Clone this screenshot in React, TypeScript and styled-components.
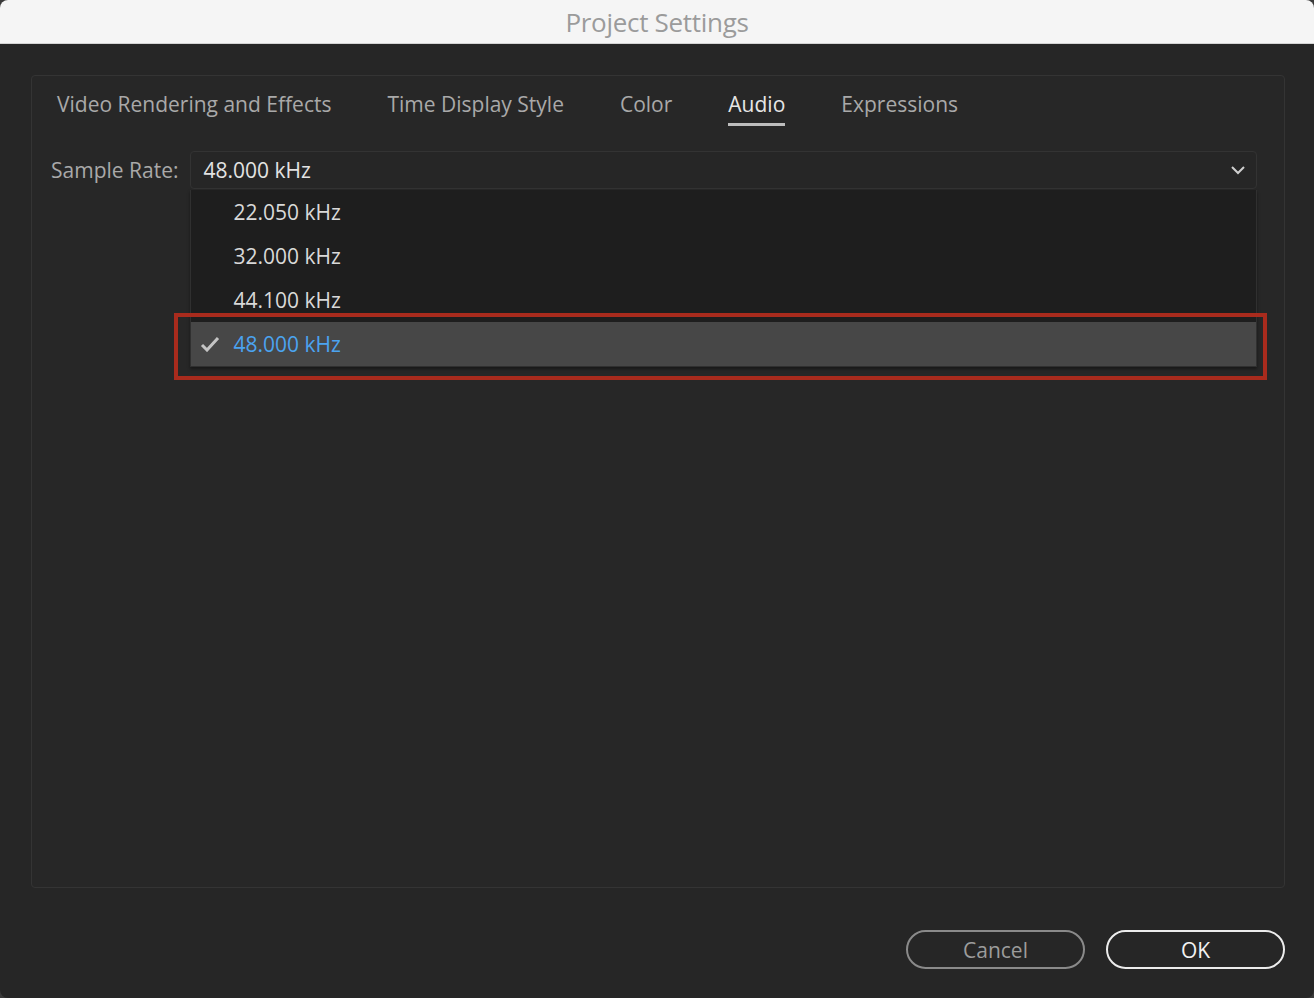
import React from 'react';
import styled, { createGlobalStyle } from 'styled-components';

const GlobalStyle = createGlobalStyle`
  html, body {
    margin: 0;
    padding: 0;
    background: #3a3a3a;
  }
  body {
    font-family: 'Open Sans', 'Noto Sans', sans-serif;
  }
`;

const Window = styled.div`
  width: 1314px;
  height: 998px;
  display: flex;
  flex-direction: column;
  background: #262626;
  border-radius: 8px;
  overflow: hidden;
`;

const TitleBar = styled.div`
  height: 43px;
  flex: none;
  display: flex;
  align-items: center;
  justify-content: center;
  background: #f5f5f5;
  border-bottom: 1px solid #d4d4d4;
  color: #9b9b9b;
  font-size: 26px;
  letter-spacing: -0.3px;
`;

const Body = styled.div`
  flex: 1;
  display: flex;
  flex-direction: column;
  padding: 31px 29px 29px 31px;
`;

const Panel = styled.div`
  height: 813px;
  flex: none;
  box-sizing: border-box;
  border: 1px solid #343434;
  border-radius: 4px;
  background: #272727;
  display: flex;
  flex-direction: column;
`;

const Tabs = styled.div`
  display: flex;
  gap: 56px;
  padding: 13px 0 0 25px;
  height: 75px;
  box-sizing: border-box;
`;

const Tab = styled.div<{ $active?: boolean }>`
  font-size: 21px;
  line-height: 30px;
  color: ${(p) => (p.$active ? '#e6e6e6' : '#a9a9a9')};
  border-bottom: 3px solid ${(p) => (p.$active ? '#bdbdbd' : 'transparent')};
  height: 34px;
`;

const FieldRow = styled.div`
  display: flex;
  align-items: center;
  padding: 0 27px 0 19px;
  gap: 12px;
`;

const Label = styled.div`
  font-size: 21px;
  color: #a9a9a9;
`;

const SelectWrap = styled.div`
  position: relative;
  flex: 1;
`;

const SelectBox = styled.div`
  height: 38px;
  box-sizing: border-box;
  border: 1px solid #333333;
  border-radius: 4px;
  background: #262626;
  display: flex;
  align-items: center;
  justify-content: space-between;
  padding: 0 10px 0 12px;
  font-size: 21px;
  color: #e3e3e3;
`;

const Menu = styled.div`
  position: absolute;
  top: 39px;
  left: 0;
  right: 0;
  background: #1e1e1e;
  border: 1px solid #303030;
  border-top: none;
  box-shadow: 0 2px 3px rgba(0, 0, 0, 0.4);
`;

const Item = styled.div<{ $selected?: boolean }>`
  height: 44px;
  display: flex;
  align-items: center;
  padding-left: 42px;
  position: relative;
  font-size: 21px;
  color: ${(p) => (p.$selected ? '#4ba3f0' : '#d9d9d9')};
  background: ${(p) => (p.$selected ? '#474747' : 'transparent')};
`;

const Check = styled.svg`
  position: absolute;
  left: 9px;
  top: 14px;
`;

const Highlight = styled.div`
  position: absolute;
  left: -16px;
  right: -10px;
  top: 162px;
  height: 67px;
  box-sizing: border-box;
  border: 4px solid #a92b1d;
  pointer-events: none;
`;

const Footer = styled.div`
  flex: 1;
  display: flex;
  justify-content: flex-end;
  align-items: flex-end;
  gap: 21px;
`;

const Button = styled.div<{ $primary?: boolean }>`
  width: 179px;
  height: 39px;
  box-sizing: border-box;
  border-radius: 20px;
  border: 2px solid ${(p) => (p.$primary ? '#ececec' : '#8a8a8a')};
  color: ${(p) => (p.$primary ? '#f2f2f2' : '#9c9c9c')};
  display: flex;
  align-items: center;
  justify-content: center;
  font-size: 21px;
`;

const rates = ['22.050 kHz', '32.000 kHz', '44.100 kHz', '48.000 kHz'];

export default function App() {
  return (
    <>
      <GlobalStyle />
      <Window>
        <TitleBar>Project Settings</TitleBar>
        <Body>
          <Panel>
            <Tabs>
              <Tab>Video Rendering and Effects</Tab>
              <Tab>Time Display Style</Tab>
              <Tab>Color</Tab>
              <Tab $active>Audio</Tab>
              <Tab>Expressions</Tab>
            </Tabs>
            <FieldRow>
              <Label>Sample Rate:</Label>
              <SelectWrap>
                <SelectBox>
                  <span>48.000 kHz</span>
                  <svg width="16" height="10" viewBox="0 0 16 10">
                    <path d="M2 2 L8 8 L14 2" stroke="#cfcfcf" strokeWidth="2" fill="none" />
                  </svg>
                </SelectBox>
                <Menu>
                  {rates.map((r) => (
                    <Item key={r} $selected={r === '48.000 kHz'}>
                      {r === '48.000 kHz' && (
                        <Check width="20" height="16" viewBox="0 0 20 16">
                          <path d="M2 9 L7 14 L18 2" stroke="#c4c4c4" strokeWidth="3" fill="none" />
                        </Check>
                      )}
                      {r}
                    </Item>
                  ))}
                </Menu>
                <Highlight />
              </SelectWrap>
            </FieldRow>
          </Panel>
          <Footer>
            <Button>Cancel</Button>
            <Button $primary>OK</Button>
          </Footer>
        </Body>
      </Window>
    </>
  );
}
